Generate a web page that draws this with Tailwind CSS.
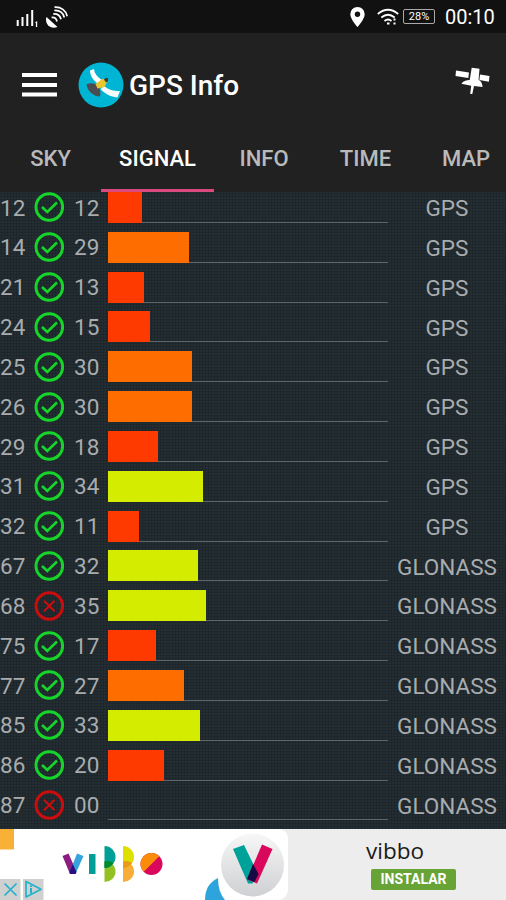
<!DOCTYPE html>
<html lang="en">
<head>
  <meta charset="UTF-8" />
  <meta name="viewport" content="width=device-width, initial-scale=1" />
  <title>GPS Info</title>
  <script src="https://cdn.jsdelivr.net/npm/@tailwindcss/browser@4"></script>
</head>
<body class="w-[506px] h-[900px] overflow-hidden flex flex-col bg-[#212121] font-['Roboto',sans-serif]">

  <!-- Status bar -->
  <div class="h-[33px] shrink-0 bg-[#111111] text-white flex items-center justify-between pl-4 pr-[10px]">
    <div class="flex items-center gap-[6px]">
      <svg class="w-[23px] h-[20px]" viewBox="0 0 23 20" fill="#fff">
        <path d="M.700 13h2v6h-2zM5.500 10h2v9h-2zM10.300 7h2v12h-2zM15.200 3h2v16h-2zM19 15.500l2.200-1.500v6h-1.300v-4z"/>
      </svg>
      <svg class="w-[23px] h-[24px]" viewBox="0 0 23 24" fill="none" stroke="#fff" stroke-width="1.700">
        <path d="M1.500 12C-.5 17.500 4 25 12.500 22z" fill="#fff" stroke="none"/>
        <path d="M6.500 12.500c3-.3 5 1.200 5.500 4M8.200 9c4-.3 7 2 7.800 5.300M9.300 5.500c5-.3 8.800 2.400 10 7M9.500 2.200c6.500-.5 11.500 3.300 12.700 9"/>
      </svg>
    </div>
    <div class="flex items-center">
      <svg class="w-[15px] h-[20px] mr-3" viewBox="0 0 15 20" fill="#fff" fill-rule="evenodd">
        <path d="M7.500 0A7.200 7.200 0 0 0 .3 7.200C.3 12 7.500 20 7.500 20s7.200-8 7.200-12.800A7.200 7.200 0 0 0 7.500 0zm0 4.500a2.700 2.700 0 1 1 0 5.400 2.700 2.700 0 0 1 0-5.400z"/>
      </svg>
      <svg class="w-[22px] h-[18px] mr-[4px]" viewBox="0 0 22 18" fill="none" stroke="#fff" stroke-width="1.700">
        <path d="M.8 6Q11-2.500 21.200 6M4.300 9.500q6.700-5.500 13.400 0M7.500 13q3.500-3 7 0"/>
        <path d="M10 14.500h2.500v2H10zM16.500 10.500h2v2h-2zM16.500 14.500h2v2h-2z" fill="#fff" stroke="none"/>
      </svg>
      <div class="w-[32px] h-[15px] border border-[#aaaaaa] rounded-[2px] flex items-center justify-center text-[11px] leading-none mr-[10px]">28%</div>
      <div class="text-[20px] leading-none w-[51px] pt-px whitespace-nowrap">00:10</div>
    </div>
  </div>

  <!-- App bar -->
  <header class="h-[102px] shrink-0 flex items-center pl-[22px] pr-4 pt-px">
    <svg class="w-[35px] h-[24px]" viewBox="0 0 35 24" fill="#fff">
      <path d="M0 0h35v4H0zM0 10h35v4H0zM0 19.500h35v4H0z"/>
    </svg>
    <svg class="w-[46px] h-[46px] ml-[21px]" viewBox="0 0 46 46">
      <circle cx="23" cy="23" r="22.500" fill="#00b4d4"/>
      <path d="M12 8.500L16 7c.5 4.500 3 7.500 8 11l-3.500 4C15.500 18.500 12 14 12 8.500z" fill="#fff"/>
      <path d="M26 24c5 4 9 5 16 5L39.500 35.500C32 34.500 27 32 22.500 27z" fill="#f4fbfc"/>
      <path d="M8.500 22.500c5-2.500 10-1 12.500 3 2 4 1.500 8 .5 9C15.500 34 9.500 29.500 8.500 22.500z" fill="#4b4b50"/>
      <path d="M17.500 22l7.500-5.500 4 3.500-2.500 5-7 1.500z" fill="#e9c72c"/>
      <path d="M26 17.500l2-1.800 2 .6v2.700l-2 1.500z" fill="#3d3d2c"/>
    </svg>
    <h1 class="ml-[5px] pt-[3px] text-[28px] font-medium leading-none text-white grow whitespace-nowrap">GPS Info</h1>
    <svg class="w-[36px] h-[28px] mb-[7px]" viewBox="0 0 36 28" fill="#fff">
      <path d="M2 3.500l13 2-.7 5.500L1.500 9zM26 7.500l9.500 1.500-.6 5.700-9.500-1.700zM17.700.700l7.800 1-.9 11c2.600 1.500 3.900 4 3.900 7.300L20 19l-1.700 8h-2.100l1-8.300-9.700-2c1.500-2.500 4.500-3.700 8.200-3.700z"/>
    </svg>
  </header>

  <!-- Tabs -->
  <nav class="h-[57px] shrink-0 flex text-[22px] font-medium text-[#bababa] whitespace-nowrap">
    <a class="w-[101px] flex items-center justify-center pb-[10px]">SKY</a>
    <a class="w-[113px] flex items-center justify-center pb-[7px] text-white border-b-[3px] border-[#d84a80]">SIGNAL</a>
    <a class="w-[100px] flex items-center justify-center pb-[10px]">INFO</a>
    <a class="w-[103px] flex items-center justify-center pb-[10px]">TIME</a>
    <a class="w-[89px] pl-[25px] flex items-center pb-[10px]">MAP</a>
  </nav>

  <!-- Satellite list -->
  <main class="h-[637px] shrink-0 overflow-hidden bg-[#232d32] bg-[radial-gradient(#1b2328_0.8px,transparent_1.2px)] bg-[size:3px_3px]">
    <div id="list" class="-mt-[4.500px]"></div>
  </main>

  <!-- Ad banner -->
  <footer class="h-[71px] shrink-0 flex bg-white">
    <svg class="w-[288px] h-[71px] shrink-0" viewBox="0 829 288 71">
      <defs>
        <linearGradient id="disc" x1="0" y1="0" x2="0" y2="1">
          <stop offset="0" stop-color="#f7f7f7"/>
          <stop offset="1" stop-color="#cfd0d3"/>
        </linearGradient>
      </defs>
      <path fill="#ededed" d="M275 829h13v71h-13z"/>
      <path fill="#fff" d="M218 829h62q8 2 8 10v50q0 8-8 11h-62z"/>
      <path fill="#f9b036" d="M0 829h14v20.500H0z"/>
      <!-- wordmark -->
      <path d="M62.500 856l6-2.500 7.500 17-2 3.500h-4z" fill="#8c1d82"/>
      <path d="M77 853.500l6.500 2.500-8 18H71l-.500-4z" fill="#36a3dc"/>
      <path d="M72.800 864l3.700 8-1 2H70l-.500-2z" fill="#2b0d80"/>
      <path d="M89 854h6.500v20H89z" fill="#009f97"/>
      <path d="M104.500 861a11 10.500 0 0 1 0 21z" fill="#93c123"/>
      <path d="M104.500 846a11 11 0 0 1 0 22z" fill="#009f97"/>
      <path d="M104.500 861.500q5-1.500 9 1.500-3 5-9 5z" fill="#008a2c"/>
      <path d="M123 861a11 10.500 0 0 1 0 21z" fill="#f7ad38"/>
      <path d="M123 846a11 11 0 0 1 0 22z" fill="#dde000"/>
      <path d="M123 861.500q5-1.500 9 1.500-3 5-9 5z" fill="#e89a18"/>
      <circle cx="151.500" cy="864" r="11" fill="#d9085c"/>
      <path d="M143.700 871.800a11 11 0 0 1 15.600-15.600z" fill="#f98d09"/>
      <!-- ad choices -->
      <path fill="#d0d0d0" d="M0 879h20.500v21H0zM23 879h20.500v21H23z"/>
      <path d="M4.500 883.500l12 12M16.500 883.500l-12 12M26 881.500v15.500l15-7.700z" fill="none" stroke="#1fb4cc" stroke-width="1.700" stroke-linejoin="round"/>
      <path fill="#1fb4cc" d="M30 885.500h2v1.500h-2zM30 888h2v5.500h-2z"/>
      <!-- app icon -->
      <path d="M205 900q0-16 13-22 0 14 7 22z" fill="#2ea4dc"/>
      <circle cx="252.500" cy="865" r="31.500" fill="url(#disc)"/>
      <path d="M233 849l11-4 14 29-5.500 9.500h-4.500z" fill="#00a199"/>
      <path d="M262 844.500l10.500 4.500-15.500 34.500-10-4z" fill="#d9085c"/>
      <path d="M253 864l5.500 10-4 8-7.500-3z" fill="#150a45"/>
    </svg>
    <div class="w-[218px] bg-[#ededed] pl-[78px] pt-[8px]">
      <div class="text-[22.500px] leading-[28px] text-[#1b1b1b] font-['Open_Sans'] whitespace-nowrap">vibbo</div>
      <div class="mt-[4px] ml-[5px] w-[85px] h-[21px] rounded-[2px] bg-[#68a336] text-white text-[14px] font-bold flex items-center justify-center">INSTALAR</div>
    </div>
  </footer>

  <script>
    // [satellite id, in use, signal strength, system]
    const satellites = [
      [12, true, 12, 'GPS'],
      [14, true, 29, 'GPS'],
      [21, true, 13, 'GPS'],
      [24, true, 15, 'GPS'],
      [25, true, 30, 'GPS'],
      [26, true, 30, 'GPS'],
      [29, true, 18, 'GPS'],
      [31, true, 34, 'GPS'],
      [32, true, 11, 'GPS'],
      [67, true, 32, 'GLONASS'],
      [68, false, 35, 'GLONASS'],
      [75, true, 17, 'GLONASS'],
      [77, true, 27, 'GLONASS'],
      [85, true, 33, 'GLONASS'],
      [86, true, 20, 'GLONASS'],
      [87, false, 0, 'GLONASS']
    ];

    const okIcon = `<svg class="w-[30px] h-[30px] shrink-0" viewBox="0 0 30 30" fill="none" stroke="#16d42a" stroke-width="3">
      <circle cx="15.300" cy="15" r="13.300"/><path d="M8 15l5.300 5L23 10.500" stroke-width="2.700"/></svg>`;
    const badIcon = `<svg class="w-[30px] h-[30px] shrink-0" viewBox="0 0 30 30" fill="none" stroke="#cb0d0d" stroke-width="3">
      <circle cx="15.300" cy="15" r="13.300"/><path d="M10 9.700l10.600 10.600M20.600 9.700L10 20.300" stroke-width="2"/></svg>`;

    function barColor(snr) {
      if (snr > 30) return 'bg-[#d3ec00]';
      if (snr > 20) return 'bg-[#fd6d00]';
      return 'bg-[#ff3a00]';
    }

    document.getElementById('list').innerHTML = satellites.map(([id, used, snr, system]) => `
      <div class="h-[39.830px] flex items-center text-[22.500px] leading-none text-[#a9acae]">
        <div class="w-[34px] pt-px">${id}</div>
        ${used ? okIcon : badIcon}
        <div class="w-[44px] pl-[10px] pt-px">${String(snr).padStart(2, '0')}</div>
        <div class="w-[280px] h-[31px] border-b border-[#5d666a]">
          <div class="h-[31px] ${barColor(snr)}" style="width: ${snr}%"></div>
        </div>
        <div class="w-[118px] pt-[2px] text-center">${system}</div>
      </div>`).join('');
  </script>
</body>
</html>
